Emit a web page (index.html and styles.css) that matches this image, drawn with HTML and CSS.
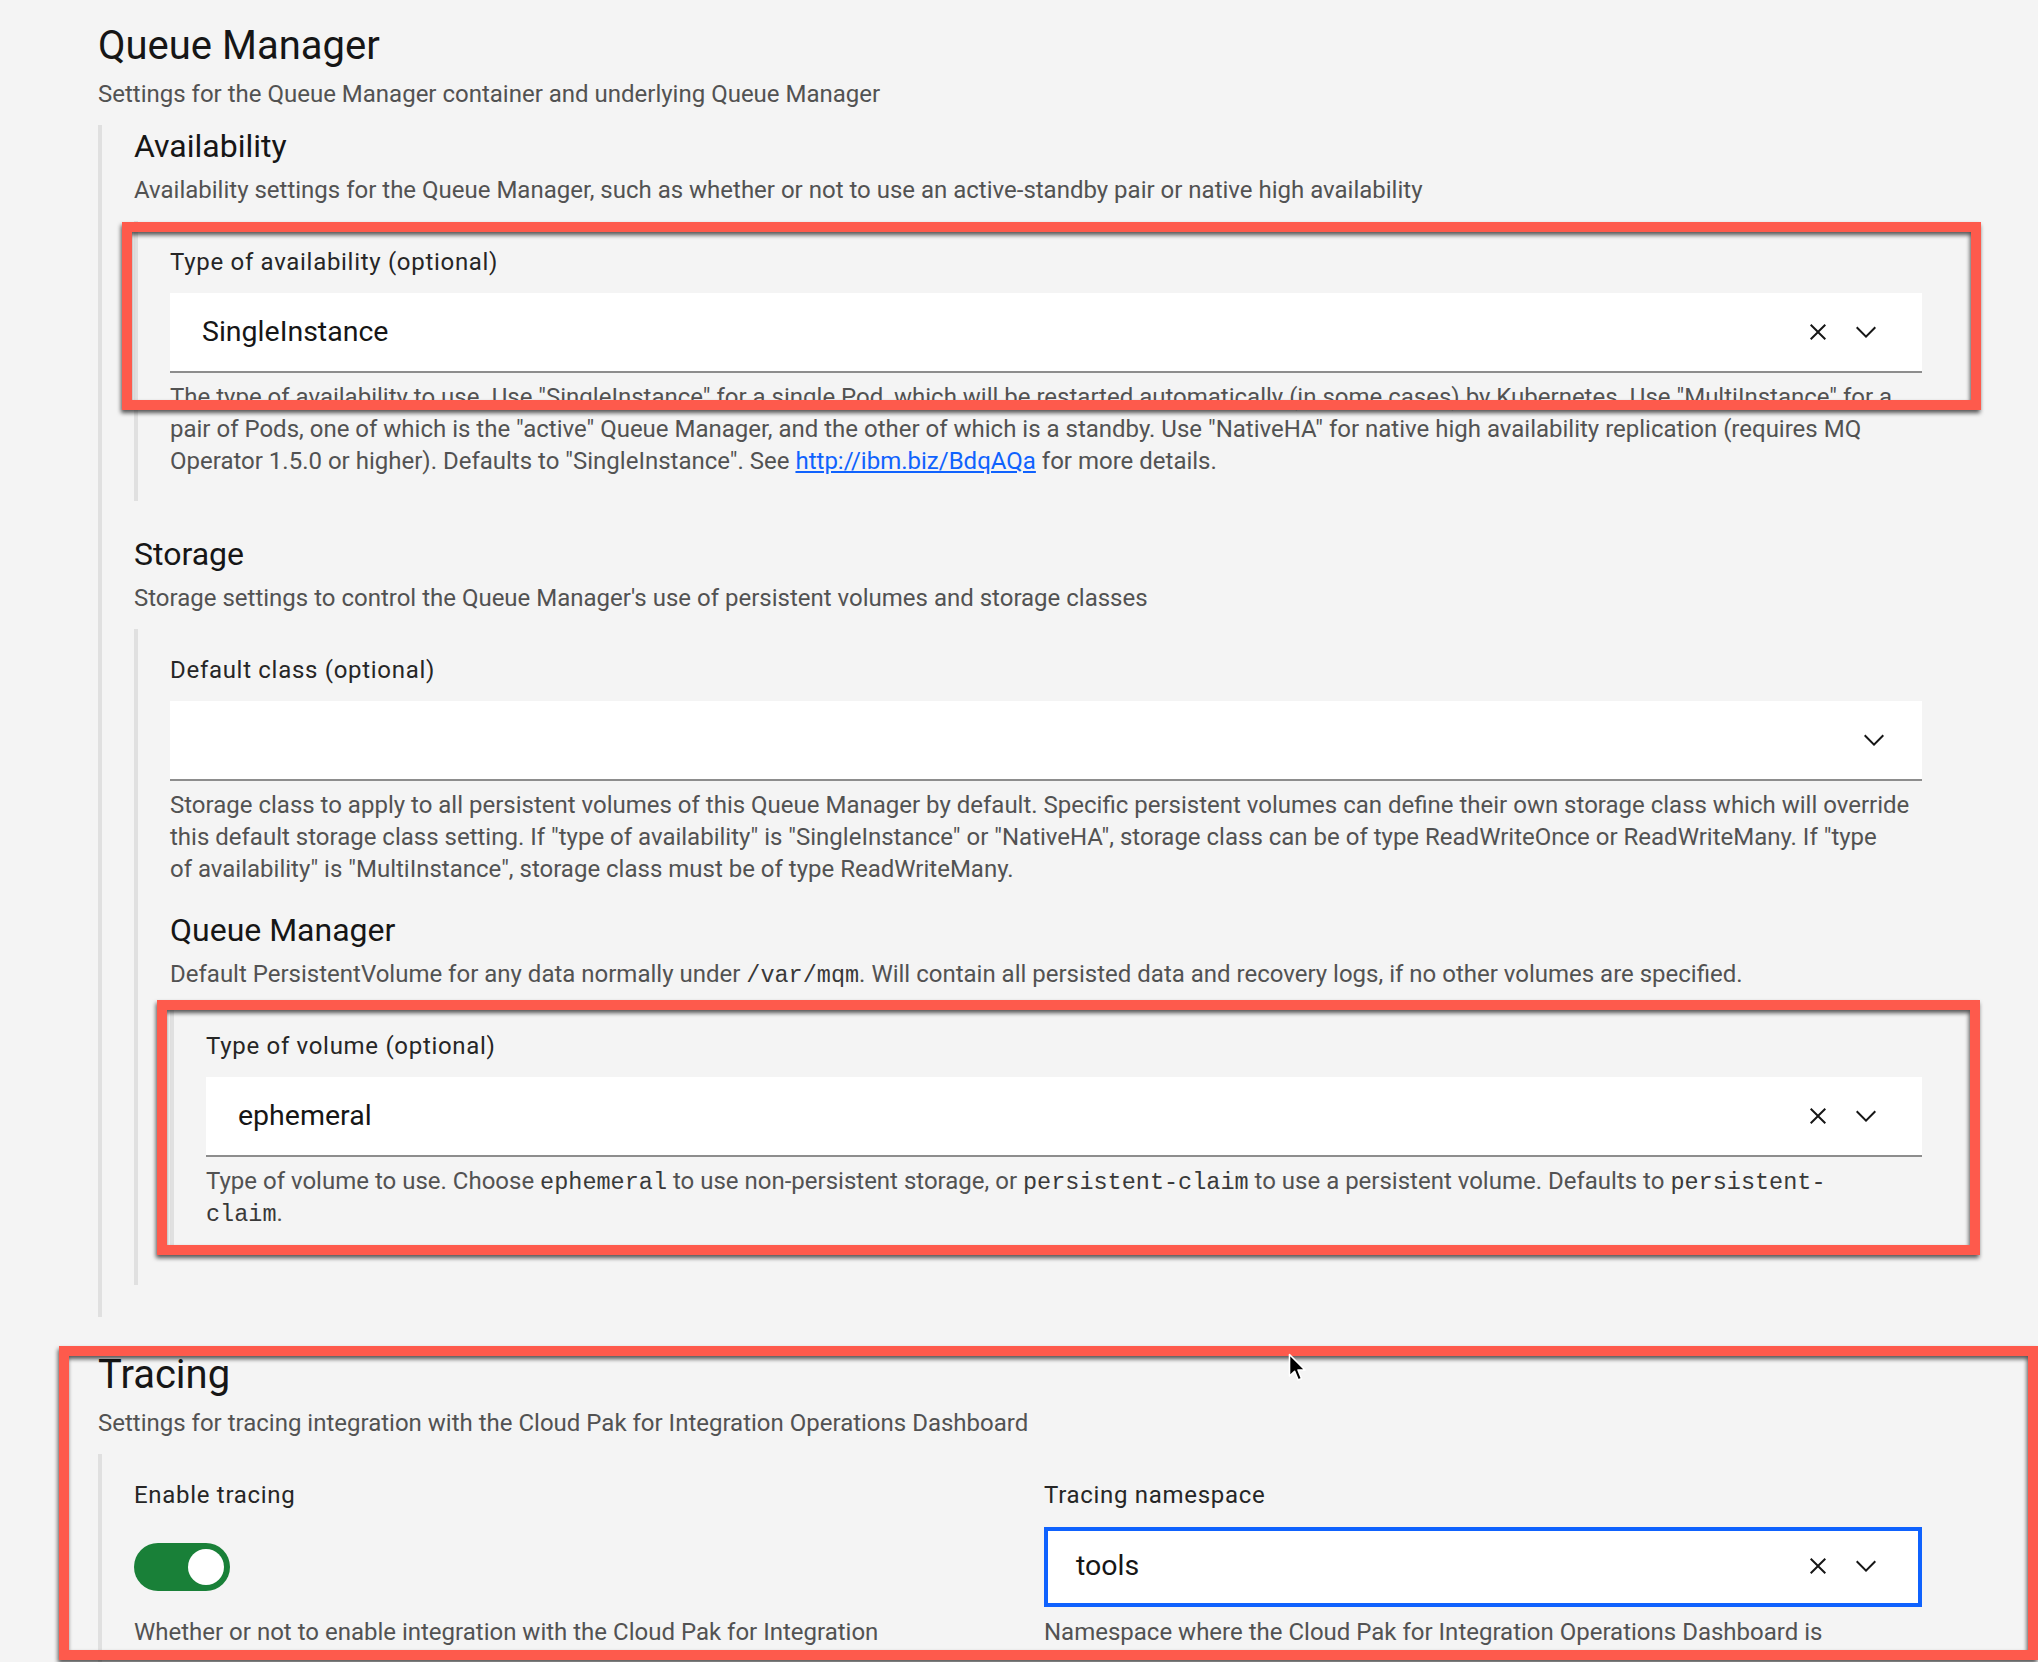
FILE: index.html
```html
<!DOCTYPE html>
<html lang="en">
<head>
<meta charset="utf-8">
<title>Queue Manager settings</title>
<link rel="stylesheet" href="styles.css">
</head>
<body>
<main class="page">
  <section class="sec">
    <h2 class="title">Queue Manager</h2>
    <p class="desc">Settings for the Queue Manager container and underlying Queue Manager</p>
    <div class="group">
      <section class="sub">
        <h3 class="subtitle">Availability</h3>
        <p class="desc">Availability settings for the Queue Manager, such as whether or not to use an active-standby pair or native high availability</p>
        <div class="group">
          <div class="field">
            <label class="label">Type of availability (optional)</label>
            <div class="select clearable">
              <span class="value">SingleInstance</span>
              <svg class="ico ico-x" viewBox="0 0 32 32"><path d="M24 9.4L22.6 8 16 14.6 9.4 8 8 9.4 14.6 16 8 22.6 9.4 24 16 17.4 22.6 24 24 22.6 17.4 16 24 9.4z"/></svg>
              <svg class="ico ico-chev" viewBox="0 0 16 16"><path d="M8 11L3 6 3.7 5.3 8 9.6 12.3 5.3 13 6z"/></svg>
            </div>
            <p class="helper">The type of availability to use. Use "SingleInstance" for a single Pod, which will be restarted automatically (in some cases) by Kubernetes. Use "MultiInstance" for a<br>pair of Pods, one of which is the "active" Queue Manager, and the other of which is a standby. Use "NativeHA" for native high availability replication (requires MQ<br>Operator 1.5.0 or higher). Defaults to "SingleInstance". See <a class="link" href="#">http://ibm.biz/BdqAQa</a> for more details.</p>
          </div>
        </div>
      </section>
      <section class="sub">
        <h3 class="subtitle">Storage</h3>
        <p class="desc">Storage settings to control the Queue Manager's use of persistent volumes and storage classes</p>
        <div class="group">
          <div class="field">
            <label class="label">Default class (optional)</label>
            <div class="select">
              <span class="value"></span>
              <svg class="ico ico-chev" viewBox="0 0 16 16"><path d="M8 11L3 6 3.7 5.3 8 9.6 12.3 5.3 13 6z"/></svg>
            </div>
            <p class="helper">Storage class to apply to all persistent volumes of this Queue Manager by default. Specific persistent volumes can define their own storage class which will override<br>this default storage class setting. If "type of availability" is "SingleInstance" or "NativeHA", storage class can be of type ReadWriteOnce or ReadWriteMany. If "type<br>of availability" is "MultiInstance", storage class must be of type ReadWriteMany.</p>
          </div>
          <section class="sub">
            <h3 class="subtitle">Queue Manager</h3>
            <p class="desc">Default PersistentVolume for any data normally under <code class="code">/var/mqm</code>. Will contain all persisted data and recovery logs, if no other volumes are specified.</p>
            <div class="group">
              <div class="field">
                <label class="label">Type of volume (optional)</label>
                <div class="select clearable">
                  <span class="value">ephemeral</span>
                  <svg class="ico ico-x" viewBox="0 0 32 32"><path d="M24 9.4L22.6 8 16 14.6 9.4 8 8 9.4 14.6 16 8 22.6 9.4 24 16 17.4 22.6 24 24 22.6 17.4 16 24 9.4z"/></svg>
                  <svg class="ico ico-chev" viewBox="0 0 16 16"><path d="M8 11L3 6 3.7 5.3 8 9.6 12.3 5.3 13 6z"/></svg>
                </div>
                <p class="helper">Type of volume to use. Choose <code class="code">ephemeral</code> to use non-persistent storage, or <code class="code">persistent-claim</code> to use a persistent volume. Defaults to <code class="code">persistent-</code><br><code class="code">claim</code>.</p>
              </div>
            </div>
          </section>
        </div>
      </section>
    </div>
  </section>

  <section class="sec sec-tracing">
    <h2 class="title">Tracing</h2>
    <p class="desc">Settings for tracing integration with the Cloud Pak for Integration Operations Dashboard</p>
    <div class="group cols">
      <div class="field">
        <label class="label">Enable tracing</label>
        <div class="toggle"><span class="knob"></span></div>
        <p class="helper helper-toggle">Whether or not to enable integration with the Cloud Pak for Integration</p>
      </div>
      <div class="field">
        <label class="label">Tracing namespace</label>
        <div class="select clearable focused">
          <span class="value">tools</span>
          <svg class="ico ico-x" viewBox="0 0 32 32"><path d="M24 9.4L22.6 8 16 14.6 9.4 8 8 9.4 14.6 16 8 22.6 9.4 24 16 17.4 22.6 24 24 22.6 17.4 16 24 9.4z"/></svg>
          <svg class="ico ico-chev" viewBox="0 0 16 16"><path d="M8 11L3 6 3.7 5.3 8 9.6 12.3 5.3 13 6z"/></svg>
        </div>
        <p class="helper helper-ns">Namespace where the Cloud Pak for Integration Operations Dashboard is</p>
      </div>
    </div>
  </section>
</main>

<div class="mark mark-1"></div>
<div class="mark mark-2"></div>
<div class="mark mark-3"></div>

<svg class="cursor" viewBox="0 0 20 30"><path d="M1.5 1.5 L1.5 23 L6.6 18.3 L10.2 27 L13.6 25.6 L10 17 L17 17 Z" fill="#000" stroke="#fff" stroke-width="1.6" stroke-linejoin="round"/></svg>
</body>
</html>
```
FILE: styles.css
```css
html {
  overflow: hidden;
}

body {
  margin: 0;
  background: #f4f4f4;
  font-family: Roboto, "Liberation Sans", Arial, sans-serif;
  color: #161616;
  position: relative;
  min-height: 1662px;
}

.page {
  width: 1824px;
  margin-left: 98px;
  padding-top: 22px;
}

.sec {
  padding-bottom: 32px;
}

.sec-tracing {
  margin-top: 2px;
}

.title {
  margin: 0 0 8px;
  font-size: 40px;
  line-height: 48px;
  font-weight: 400;
  color: #161616;
}

.subtitle {
  margin: 0 0 7px;
  font-size: 32px;
  line-height: 42px;
  font-weight: 400;
  color: #161616;
}

.desc {
  margin: 0;
  font-size: 24px;
  line-height: 32px;
  color: #525252;
}

.group {
  margin-top: 15px;
  border-left: 4px solid #e0e0e0;
  padding-left: 32px;
}

.sub {
  padding-bottom: 32px;
}

.field {
  padding: 25px 0 24px;
}

.label {
  display: block;
  font-size: 24px;
  line-height: 32px;
  color: #262626;
  letter-spacing: 0.7px;
}

.select {
  margin-top: 15px;
  height: 80px;
  box-sizing: border-box;
  background: #ffffff;
  border-bottom: 2px solid #8d8d8d;
  display: flex;
  align-items: center;
  padding: 0 32px 0 32px;
}

.value {
  flex: 1;
  font-size: 28.5px;
  line-height: 36px;
  color: #161616;
}

.ico {
  width: 32px;
  height: 32px;
  fill: #161616;
  flex: none;
}

.clearable .ico-x {
  margin-right: 16px;
}

.clearable .ico-chev {
  margin-right: 8px;
}

.focused {
  outline: 4px solid #0f62fe;
  outline-offset: -4px;
  border-bottom-color: transparent;
  margin-top: 16px;
}

.helper {
  margin: 8px 0 0;
  font-size: 24px;
  line-height: 32px;
  color: #525252;
}

.helper-ns {
  margin-top: 9px;
}

.code {
  font-family: "Liberation Mono", "DejaVu Sans Mono", monospace;
  font-size: 23.5px;
  line-height: 1;
  color: #393939;
}

.link {
  color: #0f62fe;
  text-decoration: underline;
}

.cols {
  display: grid;
  grid-template-columns: 1fr 1fr;
  column-gap: 32px;
}

.toggle {
  margin-top: 32px;
  width: 96px;
  height: 48px;
  border-radius: 24px;
  background: #198038;
  box-sizing: border-box;
  padding: 6px;
  display: flex;
  justify-content: flex-end;
}

.knob {
  width: 36px;
  height: 36px;
  border-radius: 50%;
  background: #ffffff;
}

.helper-toggle {
  margin-top: 25px;
}

/* screenshot annotation rectangles drawn over the page */
.mark {
  position: absolute;
  box-sizing: border-box;
  border: 10px solid #fe5a4c;
  filter: drop-shadow(-1px 3px 2px rgba(0, 0, 0, 0.65));
  pointer-events: none;
}

.mark-1 {
  left: 122px;
  top: 222px;
  width: 1859px;
  height: 188px;
}

.mark-2 {
  left: 157px;
  top: 1000px;
  width: 1823px;
  height: 255px;
}

.mark-3 {
  left: 59px;
  top: 1346px;
  width: 1979px;
  height: 314px;
}

.cursor {
  position: absolute;
  left: 1288px;
  top: 1353px;
  width: 20px;
  height: 30px;
}
```
